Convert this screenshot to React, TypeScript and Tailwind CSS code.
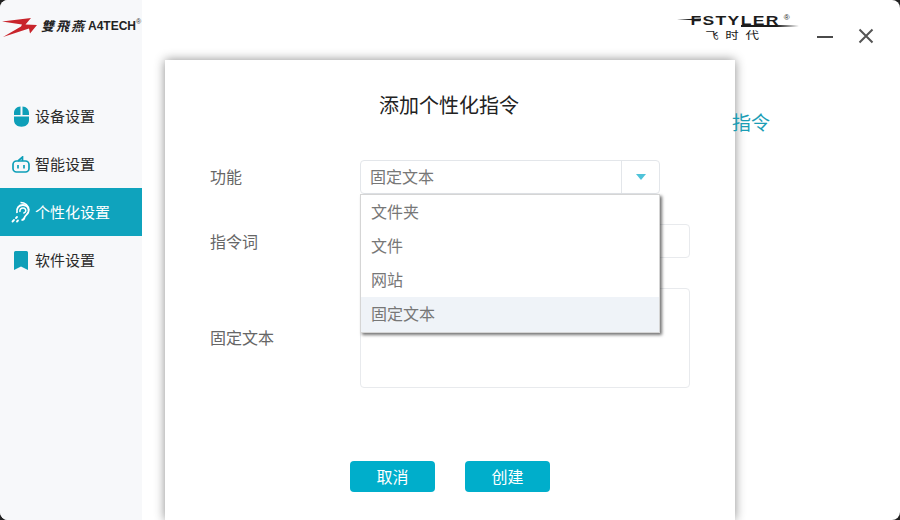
import React from 'react'

const cjk = { fontFamily: '"Noto Sans CJK SC", "Liberation Sans", sans-serif' }
const latin = { fontFamily: '"Liberation Sans", sans-serif' }

const MouseIcon = () => (
  <svg width="15" height="21" viewBox="0 0 15 21">
    <path d="M0 9V7C0 3.500 2.500 .5 6.500 .5V9z M8.500 .5C12.500 .5 15 3.500 15 7v2H8.500z M0 10.500h15V14c0 4-3 6.700-7.500 6.700S0 18 0 14z" fill="#0e9fb8" />
  </svg>
)

const RobotIcon = () => (
  <svg width="18" height="17" viewBox="0 0 18 17" fill="none" stroke="#0e9fb8" strokeWidth="1.700">
    <rect x="1" y="5" width="16" height="11" rx="3.500" />
    <path d="M6 5l4.500-4v4" />
    <path d="M6 9v3.500M12 9v3.500" />
  </svg>
)

const EarIcon = () => (
  <svg width="20" height="22" viewBox="0 0 20 22" fill="none" stroke="#fff">
    <path d="M9.500 1.500c4.500 0 8.500 3 8.500 8" strokeWidth="1.400" />
    <path d="M6 12c-1-5 2-8 6-8s6 3 5.500 6.500c-.5 3-3.500 3.500-4 6-.3 1.500-1.500 2.500-3 2.500" strokeWidth="1.800" />
    <path d="M9 11c-.5-2.500 1-4 3-4s3 1.500 2.800 3c-.2 1.500-1.800 1.500-2.300 2.500" strokeWidth="1.500" />
    <path d="M1.500 20.500l1.500-1.500M5 17l1-1M6 20.500l1-1" strokeWidth="1.800" strokeLinecap="round" />
  </svg>
)

const BookmarkIcon = () => (
  <svg width="14" height="19" viewBox="0 0 14 19">
    <path d="M0 1.500A1.500 1.500 0 0 1 1.500 0h11A1.500 1.500 0 0 1 14 1.500V19l-7-3.500L0 19z" fill="#0e9fb8" />
  </svg>
)

const SwooshLogo = () => (
  <svg width="37" height="20" viewBox="0 0 37 20" className="shrink-0">
    <path d="M0 3.500L29 0l-5.500 6.500L35 7l-7 8.500-1-5L1 19l18-10.500 1-2z" fill="#c8242b" />
  </svg>
)

const navItems = [
  { label: '设备设置', icon: <MouseIcon />, active: false },
  { label: '智能设置', icon: <RobotIcon />, active: false },
  { label: '个性化设置', icon: <EarIcon />, active: true },
  { label: '软件设置', icon: <BookmarkIcon />, active: false },
]

const options = [
  { label: '文件夹', cls: 'h-[34px] pb-0.5' },
  { label: '文件', cls: 'h-[34px] pb-[3px]' },
  { label: '网站', cls: 'h-[34px] pb-0.5' },
  { label: '固定文本', cls: 'h-[35px] pb-[3px] bg-[#eff3f8]' },
]

function Sidebar() {
  return (
    <div className="w-[142px] shrink-0 bg-[#f7f8fa] flex flex-col">
      <div className="h-[92px] pt-[18px] pl-0.5 flex items-start">
        <SwooshLogo />
        <span className="ml-[2px] -mt-px text-[13px] leading-[18px] italic font-bold text-[#222] tracking-[2px] whitespace-nowrap">雙飛燕</span>
        <span className="ml-[2px] -mt-px text-[12px] leading-[18px] font-bold text-[#222] whitespace-nowrap" style={latin}>A4TECH</span>
        <span className="text-[7px] leading-[7px] text-[#333]" style={latin}>®</span>
      </div>
      {navItems.map((item) => (
        <div
          key={item.label}
          className={`h-12 flex items-center text-[15px] ${item.active ? 'bg-[#0fa3bd] text-white' : 'text-[#2b2b2b]'}`}
        >
          <div className="w-[35px] pl-[9px] pr-[2px] flex justify-center shrink-0">{item.icon}</div>
          <span>{item.label}</span>
        </div>
      ))}
    </div>
  )
}

function Dialog() {
  return (
    <div className="w-[570px] h-[460px] mt-[60px] ml-[23px] bg-white shadow-[0_0_10px_rgba(0,0,0,0.45)] px-[45px] relative shrink-0">
      <h1 className="text-[20px] font-normal text-[#222] text-center pt-[30px] leading-[30px] pr-[2px]">添加个性化指令</h1>
      <div className="mt-[40px] flex flex-col">
        <div className="flex items-center h-[34px]">
          <span className="w-[150px] text-[16px] leading-[22px] pb-0.5 text-[#666]">功能</span>
          <div className="relative w-[300px] h-[34px] border border-[#e3e6ea] rounded flex items-center">
            <span className="flex-1 pl-[9px] text-[16px] leading-[22px] pb-0.5 text-[#777]">固定文本</span>
            <div className="w-[38px] h-full border-l border-[#e3e6ea] flex items-center justify-center">
              <div className="w-0 h-0 border-x-[5px] border-x-transparent border-t-[6px] border-t-[#4fc3d9]" />
            </div>
            <div className="absolute left-[-1px] top-[33px] w-[300px] h-[139px] bg-white border border-[#d5d5d5] shadow-[2px_2px_3px_rgba(0,0,0,0.55)] z-10 flex flex-col">
              {options.map((o) => (
                <div key={o.label} className={`${o.cls} shrink-0 flex items-center pl-2.5 text-[16px] text-[#777]`}>{o.label}</div>
              ))}
            </div>
          </div>
        </div>
        <div className="flex items-center h-[34px] mt-[30px]">
          <span className="w-[150px] text-[16px] leading-[22px] text-[#666]">指令词</span>
          <div className="w-[330px] h-[34px] border border-[#e8eaed] rounded" />
        </div>
        <div className="flex items-center h-[100px] mt-[30px]">
          <span className="w-[150px] text-[16px] leading-[22px] pb-0.5 text-[#666]">固定文本</span>
          <div className="w-[330px] h-[100px] border border-[#e8eaed] rounded" />
        </div>
      </div>
      <div className="flex gap-[30px] mt-[73px] ml-[140px]">
        <button className="w-[85px] h-[31px] pb-0.5 rounded bg-[#00aecb] text-white text-[16px]">取消</button>
        <button className="w-[85px] h-[31px] pb-0.5 rounded bg-[#00aecb] text-white text-[16px]">创建</button>
      </div>
    </div>
  )
}

function HeaderRight() {
  return (
    <>
      <svg width="122" height="12" viewBox="0 0 122 12" className="absolute left-[-58px] top-[16px]">
        <path d="M0 3.500L24 2.500v2z" fill="#1c1c1c" />
        <path d="M64 9h36l22 1-22 1H64z" fill="#1c1c1c" />
      </svg>
      <div className="absolute left-[-62px] top-[15px] w-[125px] flex flex-col items-center text-[#1c1c1c]">
        <div className="relative h-[12px] flex items-center">
          <span className="text-[13px] leading-[12px] font-bold tracking-[1px] scale-x-[1.35] whitespace-nowrap" style={latin}>FSTYLER</span>
          <span className="absolute right-[-21px] top-[-1px] text-[8px] leading-[8px]" style={latin}>®</span>
        </div>
        <span className="mt-[3px] text-[10px] leading-[10px] tracking-[5px] scale-x-[1.35]">飞时代</span>
      </div>
      <div className="absolute left-[82px] top-[28px] flex items-start gap-[25px]">
        <div className="w-4 h-[2px] mt-2 bg-[#4a4a4a]" />
        <svg width="16" height="16" viewBox="0 0 16 16" stroke="#555" strokeWidth="2" fill="none">
          <path d="M1.500 1.500l13 13M14.500 1.500l-13 13" />
        </svg>
      </div>
    </>
  )
}

export default function App() {
  return (
    <div className="w-[900px] h-[520px] bg-[#222] overflow-hidden" style={cjk}>
      <div className="w-full h-full bg-white rounded-[8px] flex overflow-hidden">
        <Sidebar />
        <Dialog />
        <div className="flex-1 relative">
          <div className="absolute left-[-3px] top-[109px] text-[19px] leading-[26px] text-[#1a9db5]">指令</div>
          <HeaderRight />
        </div>
      </div>
    </div>
  )
}
